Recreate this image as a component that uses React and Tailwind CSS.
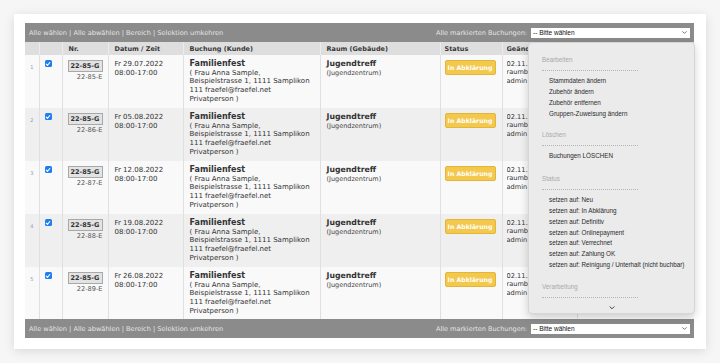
import React from "react";

const rows = [
  { n: 1, date: "Fr 29.07.2022", e: "22-85-E" },
  { n: 2, date: "Fr 05.08.2022", e: "22-86-E" },
  { n: 3, date: "Fr 12.08.2022", e: "22-87-E" },
  { n: 4, date: "Fr 19.08.2022", e: "22-88-E" },
  { n: 5, date: "Fr 26.08.2022", e: "22-89-E" },
];

function Chevron({ className }) {
  return (
    <svg viewBox="0 0 8 5" className={className} fill="none">
      <path d="M1 1 L4 4 L7 1" stroke="currentColor" strokeWidth="1.3" strokeLinecap="round" strokeLinejoin="round" />
    </svg>
  );
}

function Toolbar() {
  return (
    <div className="flex h-[19px] items-center justify-between bg-[#8b8b8b] pl-[4px] pr-[4px]">
      <div className="text-[6.6px] leading-[8px] text-[#e4e4e4]">
        Alle wählen | Alle abwählen | Bereich | Selektion umkehren
      </div>
      <div className="flex items-center">
        <span className="mr-[4px] text-[6.5px] leading-[8px] text-[#e4e4e4]">Alle markierten Buchungen:</span>
        <div className="flex h-[10px] w-[159px] items-center justify-between bg-white pl-[2px] pr-[3px]">
          <span className="font-['Liberation_Sans'] text-[6.5px] leading-[8px] text-[#111]">-- Bitte wählen</span>
          <Chevron className="h-[3px] w-[5px] text-[#555]" />
        </div>
      </div>
    </div>
  );
}

function Check() {
  return (
    <span className="flex h-[7px] w-[7px] items-center justify-center rounded-[1.5px] bg-[#1f7cf1]">
      <svg viewBox="0 0 8 8" className="h-[6px] w-[6px]" fill="none">
        <path d="M1.6 4.2 L3.3 5.9 L6.4 2" stroke="white" strokeWidth="1.4" strokeLinecap="round" strokeLinejoin="round" />
      </svg>
    </span>
  );
}

function MenuLabel({ children }) {
  return <div className="h-[10.8px] pl-[13px] leading-[10.8px] text-[#a9a9a9]">{children}</div>;
}
function MenuDots() {
  return (
    <div className="flex h-[10.8px] items-center pl-[13px]">
      <div className="w-[96px] border-t border-dotted border-[#b5b5b5]" />
    </div>
  );
}
function MenuItem({ children }) {
  return <div className="h-[10.8px] pl-[20px] leading-[10.8px] text-[#2a2a2a]">{children}</div>;
}

export default function App() {
  return (
    <div className="h-[363px] w-[720px] overflow-hidden bg-[#f6f6f6] pl-[14px] pt-[14px] font-['DejaVu_Sans',sans-serif]">
      <div className="relative h-[335px] w-[692px] bg-white pl-[11px] pt-[9px] shadow-[0_2px_10px_rgba(0,0,0,0.12)]">
        <div className="w-[669px]">
          <Toolbar />
          <table className="w-[669px] table-fixed border-collapse">
            <colgroup>
              <col className="w-[14px]" />
              <col className="w-[23px]" />
              <col className="w-[46px]" />
              <col className="w-[75px]" />
              <col className="w-[137px]" />
              <col className="w-[120px]" />
              <col className="w-[62px]" />
              <col className="w-[75px]" />
              <col className="w-[117px]" />
            </colgroup>
            <thead>
              <tr className="h-[13px] bg-[#dedede] text-left text-[6.5px] font-bold leading-[8px] text-[#383838]">
                <th className="border-r border-[#ececec]"></th>
                <th className="border-r border-[#ececec]"></th>
                <th className="border-r border-[#ececec] pl-[6px]">Nr.</th>
                <th className="border-r border-[#ececec] pl-[6px]">Datum / Zeit</th>
                <th className="border-r border-[#ececec] pl-[6px]">Buchung (Kunde)</th>
                <th className="border-r border-[#ececec] pl-[6px]">Raum (Gebäude)</th>
                <th className="border-r border-[#ececec] pl-[4px]">Status</th>
                <th className="border-r border-[#ececec] pl-[4px]">
                  <div className="w-[22px] overflow-hidden whitespace-nowrap">Geänd</div>
                </th>
                <th></th>
              </tr>
            </thead>
            <tbody>
              {rows.map((r, i) => (
                <tr
                  key={r.n}
                  className={`${i === 4 ? "h-[52px]" : "h-[53px]"} align-top text-[7px] leading-[8.7px] text-[#333] ${
                    i % 2 === 1 ? "bg-[#efefef]" : "bg-[#f9f9f9]"
                  }`}
                >
                  <td className="border-r border-[#e0e0e0] pt-[9px] text-center text-[5px] leading-[6px] text-[#9a9a9a]">{r.n}</td>
                  <td className="border-r border-[#e0e0e0] pl-[5px] pt-[5px]">
                    <Check />
                  </td>
                  <td className="border-r border-[#e0e0e0] pt-[5px] pr-[5px]">
                    <div className="flex flex-col items-end">
                      <span className="flex h-[12px] w-[35px] items-center justify-center border border-[#a8a8a8] bg-[#e3e3e3] text-[6.5px] font-bold leading-[8px] text-[#333]">
                        22-85-G
                      </span>
                      <span className="mt-[1px] text-[6.6px] leading-[8px] text-[#555]">{r.e}</span>
                    </div>
                  </td>
                  <td className="border-r border-[#e0e0e0] pl-[6px] pt-[5px]">
                    <div>{r.date}</div>
                    <div>08:00-17:00</div>
                  </td>
                  <td className="border-r border-[#e0e0e0] pl-[6px] pt-[5px]">
                    <div className="text-[8px] font-bold">Familienfest</div>
                    <div>( Frau Anna Sample,</div>
                    <div className="whitespace-nowrap">Beispielstrasse 1, 1111 Samplikon</div>
                    <div>111 fraefel@fraefel.net</div>
                    <div>Privatperson )</div>
                  </td>
                  <td className="border-r border-[#e0e0e0] pl-[6px] pt-[5px]">
                    <div className="text-[7.8px] font-bold">Jugendtreff</div>
                    <div className="text-[6.5px] leading-[8px] text-[#444]">(Jugendzentrum)</div>
                  </td>
                  <td className="border-r border-[#e0e0e0] pl-[4px] pt-[5px]">
                    <span className="flex h-[15px] w-[51px] items-center justify-center rounded-[2px] border border-[#e2b638] bg-[#f3c84c] text-[6.2px] font-bold leading-[8px] text-white">
                      In Abklärung
                    </span>
                  </td>
                  <td className="border-r border-[#e0e0e0] pl-[4px] pt-[5px] text-[6.6px] leading-[8.4px]">
                    <div className="w-[22px] overflow-hidden whitespace-nowrap">
                      <div>02.11.2</div>
                      <div>raumb</div>
                      <div>admin</div>
                    </div>
                  </td>
                  <td></td>
                </tr>
              ))}
            </tbody>
          </table>
          <Toolbar />
        </div>

        <div className="absolute left-[514px] top-[28px] h-[272px] w-[167px] overflow-hidden rounded-[4px] border border-[#d6d6d6] bg-[#ebebeb] pt-[11.6px] font-['Liberation_Sans',sans-serif] text-[6.3px] shadow-[0_3px_8px_rgba(0,0,0,0.18)]">
          <MenuLabel>Bearbeiten</MenuLabel>
          <MenuDots />
          <MenuItem>Stammdaten ändern</MenuItem>
          <MenuItem>Zubehör ändern</MenuItem>
          <MenuItem>Zubehör entfernen</MenuItem>
          <MenuItem>Gruppen-Zuweisung ändern</MenuItem>
          <div className="h-[10.2px]" />
          <MenuLabel>Löschen</MenuLabel>
          <MenuDots />
          <MenuItem>Buchungen LÖSCHEN</MenuItem>
          <div className="h-[11.6px]" />
          <MenuLabel>Status</MenuLabel>
          <MenuDots />
          <MenuItem>setzen auf: Neu</MenuItem>
          <MenuItem>setzen auf: In Abklärung</MenuItem>
          <MenuItem>setzen auf: Definitiv</MenuItem>
          <MenuItem>setzen auf: Onlinepayment</MenuItem>
          <MenuItem>setzen auf: Verrechnet</MenuItem>
          <MenuItem>setzen auf: Zahlung OK</MenuItem>
          <MenuItem>setzen auf: Reinigung / Unterhalt (nicht buchbar)</MenuItem>
          <div className="h-[10.8px]" />
          <MenuLabel>Verarbeitung</MenuLabel>
          <MenuDots />
          <div className="flex justify-center pt-[3px]">
            <Chevron className="h-[3.5px] w-[6px] text-[#333]" />
          </div>
        </div>
      </div>
    </div>
  );
}
